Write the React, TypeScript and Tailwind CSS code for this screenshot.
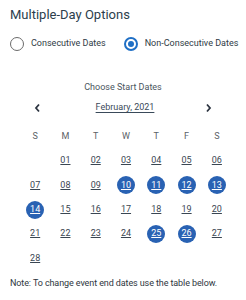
const weekdays = ["S", "M", "T", "W", "T", "F", "S"];
const selected = [10, 11, 12, 13, 14, 25, 26];

function Radio({ checked, label }: { checked: boolean; label: string }) {
  return (
    <label className="flex items-center gap-[7px] whitespace-nowrap">
      {checked ? (
        <span className="w-[14px] h-[14px] rounded-full border-2 border-[#1f6fc5] flex items-center justify-center">
          <span className="w-[6px] h-[6px] rounded-full bg-[#1f6fc5]" />
        </span>
      ) : (
        <span className="w-[14px] h-[14px] rounded-full border-[1.5px] border-[#6b6b6b]" />
      )}
      <span className="text-[9px] text-[#2f3b45]">{label}</span>
    </label>
  );
}

export default function App() {
  const cells: (number | null)[] = [null];
  for (let d = 1; d <= 28; d++) cells.push(d);

  return (
    <div className="w-[246px] h-[300px] bg-white font-['Roboto',sans-serif] overflow-hidden">
      <h2 className="pl-[10px] pt-[6px] text-[13px] leading-[18px] text-[#2c3e4c]">Multiple-Day Options</h2>
      <div className="flex items-center pl-[10px] mt-[13px] gap-[18px]">
        <Radio checked={false} label="Consecutive Dates" />
        <Radio checked={true} label="Non-Consecutive Dates" />
      </div>

      <div className="mt-[30px] text-center text-[9px] leading-[12px] text-[#4a5560]">Choose Start Dates</div>
      <div className="mt-[8px] flex items-center justify-between px-[34px] h-[14px]">
        <svg width="7" height="10" viewBox="0 0 7 10">
          <path d="M5 1.5 L2 5 L5 8.5" fill="none" stroke="#2c3440" strokeWidth="1.8" />
        </svg>
        <span className="text-[9px] text-[#3a4a5a] underline underline-offset-2 ml-[4px]">February, 2021</span>
        <svg width="7" height="10" viewBox="0 0 7 10">
          <path d="M2 1.5 L5 5 L2 8.5" fill="none" stroke="#2c3440" strokeWidth="1.8" />
        </svg>
      </div>

      <div className="mx-[20px] w-[212px] mt-[9px] grid grid-cols-7">
        {weekdays.map((w, i) => (
          <div key={i} className="h-[25px] flex items-center justify-center text-[9px] text-[#5b6268]">
            {w}
          </div>
        ))}
        {cells.map((d, i) => (
          <div key={i} className="h-[24.3px] flex items-center justify-center">
            {d !== null &&
              (selected.includes(d) ? (
                <span className="w-[18px] h-[18px] rounded-full bg-[#2962b3] flex items-center justify-center text-[9px] text-white underline underline-offset-1">
                  {String(d).padStart(2, "0")}
                </span>
              ) : (
                <span className="text-[9px] text-[#3a4652] underline underline-offset-1">
                  {String(d).padStart(2, "0")}
                </span>
              ))}
          </div>
        ))}
      </div>

      <p className="pl-[10px] mt-[7px] text-[9px] tracking-[-0.1px] text-[#2e3640]">
        Note: To change event end dates use the table below.
      </p>
    </div>
  );
}
